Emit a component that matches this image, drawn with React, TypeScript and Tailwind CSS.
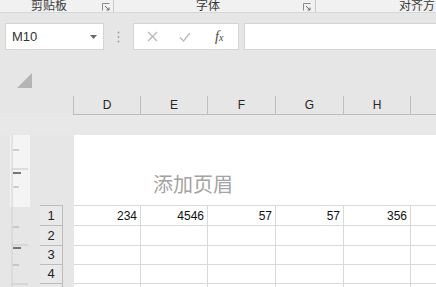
import React from 'react';

const font = { fontFamily: '"Liberation Sans", "Noto Sans CJK SC", sans-serif' };

const colWidths = [67, 67, 68, 68, 67];
const headers = ['D', 'E', 'F', 'G', 'H'];
const rows: { n: number; h: string; vals: string[] }[] = [
    { n: 1, h: 'h-[20px]', vals: ['234', '4546', '57', '57', '356'] },
    { n: 2, h: 'h-[20px]', vals: ['', '', '', '', ''] },
    { n: 3, h: 'h-[19px]', vals: ['', '', '', '', ''] },
    { n: 4, h: 'h-[19px]', vals: ['', '', '', '', ''] },
    { n: 5, h: 'h-[20px]', vals: ['', '', '', '', ''] },
];

function Launcher() {
    return (
        <svg width="8" height="8" viewBox="0 0 8 8" className="shrink-0">
            <path d="M0.5 7.5V0.5H7.5" fill="none" stroke="#8a8a8a" strokeWidth="1" />
            <path d="M3 3L7 7M7 4.5V7H4.5" fill="none" stroke="#6a6a6a" strokeWidth="1" />
        </svg>
    );
}

function Ruler() {
    // vertical page ruler at the left
    const light = [15, 52, 92, 130];
    const dark = [38, 113];
    return (
        <svg width="20" height="152" viewBox="0 0 20 152" className="shrink-0">
            <rect x="0" y="0" width="20" height="72" fill="#f4f4f4" />
            <line x1="2" y1="0" x2="2" y2="152" stroke="#d0d0d0" />
            {light.map((y) => (
                <line key={y} x1="3" y1={y} x2="9" y2={y} stroke="#a8a8a8" />
            ))}
            <line x1="2" y1="34" x2="18" y2="34" stroke="#c8c8c8" />
            <line x1="2" y1="110" x2="18" y2="110" stroke="#c8c8c8" />
            <line x1="2" y1="149" x2="18" y2="149" stroke="#c8c8c8" />
            {dark.map((y) => (
                <line key={y} x1="3" y1={y} x2="11" y2={y} stroke="#333" strokeWidth="1.3" />
            ))}
        </svg>
    );
}

export default function App() {
    return (
        <div className="w-[436px] h-[287px] overflow-hidden bg-[#e6e6e6] text-[#333]" style={font}>
            {/* ribbon group labels */}
            <div className="h-[13px] bg-[#f1f1f1] border-b border-[#d6d6d6] flex items-start overflow-hidden text-[12px] leading-[12px] text-[#3a3a3a]">
                <span className="ml-[31px] shrink-0 whitespace-nowrap">剪贴板</span>
                <div className="ml-[35px] mt-[3px] shrink-0"><Launcher /></div>
                <div className="ml-[3px] w-px h-[12px] bg-[#c9c9c9] shrink-0" />
                <span className="ml-[82px] shrink-0 whitespace-nowrap">字体</span>
                <div className="ml-[83px] mt-[3px] shrink-0"><Launcher /></div>
                <div className="ml-[4px] w-px h-[12px] bg-[#c9c9c9] shrink-0" />
                <span className="ml-[83px] shrink-0 whitespace-nowrap">对齐方</span>
            </div>

            {/* formula bar */}
            <div className="h-[44px] pt-[10px] flex items-start">
                <div className="ml-[5px] w-[99px] h-[27px] bg-white border border-[#d4d4d4] flex items-center pl-[6px] pr-[6px]">
                    <span className="text-[13px]">M10</span>
                    <svg width="7" height="4" viewBox="0 0 7 4" className="ml-auto">
                        <path d="M0 0H7L3.5 4Z" fill="#6b6b6b" />
                    </svg>
                </div>
                <svg width="3" height="12" viewBox="0 0 3 12" className="ml-[13px] mt-[8px]">
                    <circle cx="1.5" cy="1.5" r="0.9" fill="#9a9a9a" />
                    <circle cx="1.5" cy="6" r="0.9" fill="#9a9a9a" />
                    <circle cx="1.5" cy="10.5" r="0.9" fill="#9a9a9a" />
                </svg>
                <div className="ml-[13px] w-[106px] h-[27px] bg-white border border-[#d4d4d4] flex items-center">
                    <svg width="11" height="11" viewBox="0 0 11 11" className="ml-[13px]">
                        <path d="M1 1L10 10M10 1L1 10" stroke="#b9b9b9" strokeWidth="1.3" />
                    </svg>
                    <svg width="12" height="10" viewBox="0 0 12 10" className="ml-[21px]">
                        <path d="M1 5.5L4.5 9L11 1" fill="none" stroke="#b9b9b9" strokeWidth="1.3" />
                    </svg>
                    <span className="ml-[24px] text-[14px] italic text-[#444]" style={{ fontFamily: '"Liberation Serif", serif' }}>
                        f<span className="text-[10px]">x</span>
                    </span>
                </div>
                <div className="ml-[5px] flex-1 h-[27px] bg-white border border-[#d4d4d4] border-r-0" />
            </div>

            {/* select-all corner */}
            <div className="h-[39px] pt-[16px] pl-[17px]">
                <svg width="15" height="15" viewBox="0 0 15 15">
                    <path d="M15 0V15H0Z" fill="#b4b4b4" />
                </svg>
            </div>

            {/* column headers */}
            <div className="h-[19px] flex pl-[73px]">
                <div className="flex border-b border-[#bdbdbd] flex-1">
                    {headers.map((h, i) => (
                        <div
                            key={h}
                            className={`h-full flex items-center justify-center text-[12px] text-[#262626] border-r border-[#bdbdbd] ${i === 0 ? 'border-l' : ''}`}
                            style={{ width: i === 0 ? colWidths[i] + 1 : colWidths[i] }}
                        >
                            {h}
                        </div>
                    ))}
                    <div className="flex-1" />
                </div>
            </div>

            {/* horizontal ruler band */}
            <div className="h-[20px] bg-[#e8e8e8]" />

            {/* page area */}
            <div className="h-[152px] flex">
                <div className="ml-[10px]">
                    <Ruler />
                </div>
                <div className="ml-[10px] w-[23px] flex flex-col pt-[70px]">
                    {rows.map((r) => (
                        <div
                            key={r.n}
                            className={`${r.h} shrink-0 border-t border-r border-[#bcbcbc] bg-[#e9e9e9] flex items-center justify-center text-[13px] text-[#222]`}
                        >
                            {r.n < 5 ? r.n : ''}
                        </div>
                    ))}
                </div>
                <div className="ml-[11px] flex-1 bg-white flex flex-col">
                    <div className="h-[70px] shrink-0 pt-[39px] pl-[79px]">
                        <span className="text-[20px] leading-[22px] text-[#a3a3a3]">添加页眉</span>
                    </div>
                    {rows.map((r) => (
                        <div key={r.n} className={`${r.h} shrink-0 flex border-t border-[#d9d9d9]`}>
                            {r.vals.map((v, i) => (
                                <div
                                    key={i}
                                    className="h-full shrink-0 border-r border-[#d9d9d9] flex items-center justify-end pr-[3px] text-[12px] text-[#111]"
                                    style={{ width: colWidths[i] }}
                                >
                                    {v}
                                </div>
                            ))}
                            <div className="flex-1" />
                        </div>
                    ))}
                </div>
            </div>
        </div>
    );
}
